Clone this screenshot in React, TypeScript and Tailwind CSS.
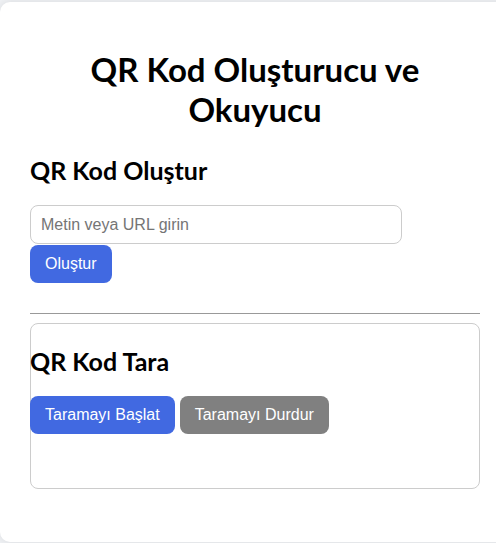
const App = () => {
  return (
    <div className="h-screen w-full overflow-hidden bg-[#f0f2f5]">
      <div className="mt-[2px] w-[510px] rounded-[10px] bg-white px-[30px] pt-[30px] pb-[53px] shadow-[0_0_10px_rgba(0,0,0,0.1)]">
        <h1 className="mt-[17px] text-center font-['Lato',sans-serif] text-[33px] leading-[40px] font-bold text-black">
          QR Kod Oluşturucu ve Okuyucu
        </h1>

        <h2 className="mt-[27px] font-['Lato',sans-serif] text-[25px] leading-[28px] font-bold text-black">
          QR Kod Oluştur
        </h2>
        <input
          type="text"
          placeholder="Metin veya URL girin"
          className="mt-[21px] block h-[39px] w-[372px] rounded-[8px] border border-[#ccc] px-[10px] font-['Liberation_Sans',Arial,sans-serif] text-[16px] placeholder:text-[#757575] outline-none"
        />
        <button className="mt-[1px] h-[38px] rounded-[8px] bg-[#4169e1] px-[15px] font-['Liberation_Sans',Arial,sans-serif] text-[16px] text-white">
          Oluştur
        </button>

        <hr className="mt-[30px] border-0 border-t border-[#999]" />

        <div className="mt-[9px] h-[166px] rounded-[8px] border border-[#ccc] pt-[23px]">
          <div className="-ml-px">
            <h2 className="font-['Lato',sans-serif] text-[25px] leading-[28px] font-bold text-black">
              QR Kod Tara
            </h2>
            <div className="mt-[21px] flex gap-[5px]">
              <button className="h-[38px] rounded-[8px] bg-[#4169e1] px-[15px] font-['Liberation_Sans',Arial,sans-serif] text-[16px] text-white">
                Taramayı Başlat
              </button>
              <button className="h-[38px] rounded-[8px] bg-[#808080] px-[15px] font-['Liberation_Sans',Arial,sans-serif] text-[16px] text-white">
                Taramayı Durdur
              </button>
            </div>
          </div>
        </div>
      </div>
    </div>
  );
};

export default App;
